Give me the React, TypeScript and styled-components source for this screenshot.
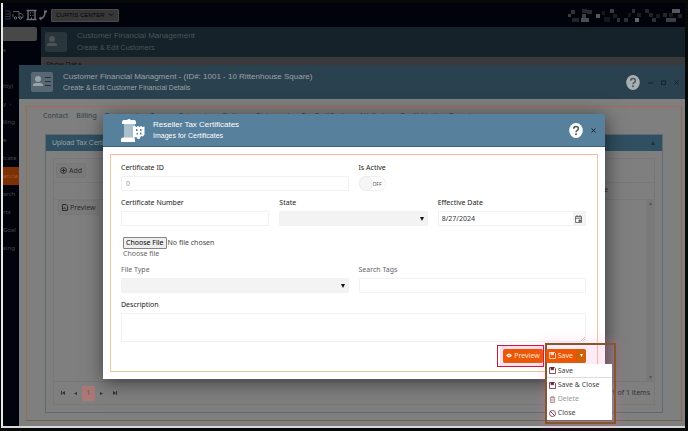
import React from "react";
import styled, { createGlobalStyle, css } from "styled-components";

const ui = '"Noto Sans", "Open Sans", sans-serif';
const head = '"Liberation Sans", Arial, sans-serif';

const Global = createGlobalStyle`
  *, *::before, *::after { box-sizing: border-box; }
  body { margin: 0; background: #070908; font: 7px/10px ${ui}; color: #333; overflow: hidden; }
  button, input, select, textarea { font: inherit; color: inherit; margin: 0; }
`;

const Screen = styled.main`
  position: relative;
  height: 100vh;
  padding: 3px 3px 3px 1px;
`;
const Desktop = styled.div`
  height: 100%;
  display: flex;
  flex-direction: column;
  border-left: 2px solid #e8e8e8;
  border-bottom: 2px solid #d8d8d8;
  background: #00030c;
`;
const TopBar = styled.header`
  flex: none;
  height: 24px;
  padding: 0 2px;
  display: flex;
  align-items: center;
  gap: 4px;
  color: #6d6f72;
`;
const CenterPicker = styled.button`
  display: flex;
  align-items: center;
  gap: 3px;
  height: 13px;
  padding: 0 4px;
  border: 1px solid #4a4a4a;
  border-radius: 1px;
  background: #383838;
  color: #050505;
  font-family: ${head};
  font-size: 6px;
`;
const Mosaic = styled.svg`
  margin-left: auto;
`;
const Columns = styled.div`
  flex: 1;
  display: flex;
  min-height: 0;
`;
const SideBar = styled.nav`
  flex: none;
  width: 38px;
  color: #46484c;
`;
const SideSearch = styled.input`
  display: block;
  width: 34px;
  height: 14px;
  border: 0;
  border-radius: 0 2px 2px 0;
  background: #484848;
`;
const SideLink = styled.a<{ $active?: boolean }>`
  display: block;
  width: 16px;
  height: 18px;
  line-height: 18px;
  font-size: 6px;
  white-space: nowrap;
  color: ${(p) => (p.$active ? "#a35c30" : "inherit")};
  background: ${(p) => (p.$active ? "#7d3003" : "transparent")};
  text-decoration: none;
`;
const BackPage = styled.section`
  flex: 1;
  background: #3a3a3a;
  color: #111;
`;
const TitleBar = styled.header<{ $bg: string; $h: number; $fg: string }>`
  display: flex;
  align-items: center;
  gap: 10px;
  height: ${(p) => p.$h}px;
  padding: 0 6px 0 12px;
  background: ${(p) => p.$bg};
  color: ${(p) => p.$fg};
  font-family: ${head};
`;
const BackTitleBar = styled(TitleBar)`
  padding-left: 4px;
`;
const ModalTitleBar = styled(TitleBar)`
  padding: 0 9px 0 18px;
  gap: 8px;
  border-bottom: 1px solid #3f6277;
`;
const Titles = styled.div`
  flex: 1;
  min-width: 0;
  white-space: nowrap;
`;
const Title = styled.h1<{ $line: number }>`
  margin: 0;
  font-size: 8px;
  font-weight: 400;
  line-height: ${(p) => p.$line}px;
`;
const SubTitle = styled.p<{ $line: number }>`
  margin: 0;
  font-size: 7px;
  line-height: ${(p) => p.$line}px;
`;
const PageCaption = styled.div`
  padding: 3px 5px;
`;
const BarButton = styled.button<{ $ink?: string }>`
  display: flex;
  padding: 0;
  border: 0;
  background: none;
  color: ${(p) => p.$ink ?? "inherit"};
`;
const BarTools = styled.div`
  display: flex;
  align-items: center;
  gap: 8px;
  color: #15232c;
`;

const Window = styled.section`
  position: absolute;
  left: 19px;
  right: 3px;
  top: 65px;
  bottom: 5px;
  display: flex;
  flex-direction: column;
  background: #7f7f7f;
  color: #2b2b2b;
`;
const WindowBody = styled.div`
  flex: 1;
  min-height: 0;
  margin: 7px 3px 5px 7px;
  padding: 4px 18px 7px;
  border: 1px solid;
  border-color: #a8675a #8d6651 #716450 #8d7351;
  display: flex;
  flex-direction: column;
`;
const Tabs = styled.nav`
  display: flex;
  gap: 8px;
  height: 23px;
  overflow: hidden;
  white-space: nowrap;
  margin-left: -2px;
  a { color: #2f404c; text-decoration: none; }
`;
const Panel = styled.section`
  flex: 1;
  min-height: 0;
  display: flex;
  flex-direction: column;
  border: 1px solid #5d6b70;
`;
const PanelHead = styled.header`
  flex: none;
  display: flex;
  align-items: center;
  justify-content: space-between;
  height: 16px;
  padding: 0 7px 0 6px;
  background: #304f60;
  color: #98a4aa;
  font-family: ${head};
  svg { color: #1b303c; }
`;
const GridBox = styled.div`
  flex: 1;
  margin: 7px;
  border: 1px solid #787878;
  display: flex;
  flex-direction: column;
`;
const GridTools = styled.div`
  padding: 4px 2px;
  border-bottom: 1px solid #787878;
`;
const GridHead = styled.div`
  height: 17px;
  padding: 2px 46px;
  text-align: right;
  border-bottom: 1px solid #787878;
`;
const GridRows = styled.div`
  flex: 1;
  display: flex;
  justify-content: space-between;
  align-items: stretch;
`;
const RowTools = styled.div`
  display: flex;
  align-items: flex-start;
  padding: 0 4px;
`;
const ScrollTrack = styled.div`
  width: 8px;
  display: flex;
  flex-direction: column;
  justify-content: space-between;
  align-items: center;
  padding: 2px 0;
  background: #797979;
  color: #555;
`;
const FlatButton = styled.button`
  display: inline-flex;
  align-items: center;
  gap: 2px;
  height: 15px;
  padding: 0 3px;
  border: 1px solid #777;
  border-radius: 1px;
  background: #7b7b7b;
`;
const Pager = styled.footer`
  display: flex;
  align-items: center;
  height: 23px;
  padding: 0 4px 0 2px;
  border-top: 1px solid #767676;
  color: #333;
`;
const PageButton = styled.button<{ $on?: boolean }>`
  display: grid;
  place-items: center;
  width: 13px;
  height: 15px;
  padding: 0;
  border: 0;
  background: ${(p) => (p.$on ? "#a97877" : "transparent")};
  color: ${(p) => (p.$on ? "#884844" : "inherit")};
`;
const PageInfo = styled.span`
  margin-left: auto;
`;

const Overlay = styled.div`
  position: absolute;
  inset: 0;
  padding: 114px 83px 0 103px;
`;
const Modal = styled.section`
  background: #fff;
  box-shadow: 1px 3px 18px rgba(0, 0, 0, 0.55);
`;
const ModalBody = styled.div`
  padding: 7px;
`;
const Form = styled.form`
  display: flex;
  flex-direction: column;
  gap: 7px;
  padding: 8px 11px 8px 10px;
  border: 1px solid;
  border-color: #ffb59c #f5c6a5 #dccb9d #f3c5a4;
`;
const Row = styled.div<{ $cols: number }>`
  display: grid;
  grid-template-columns: repeat(${(p) => p.$cols}, minmax(0, 1fr));
  gap: 10px;
`;
const Field = styled.div`
  display: flex;
  flex-direction: column;
  gap: 3px;
`;
const Label = styled.label<{ $soft?: boolean }>`
  color: ${(p) => (p.$soft ? "#666" : "#222")};
`;
const box = css`
  width: 100%;
  height: 15px;
  padding: 0 4px;
  border: 1px solid #f1f1f1;
  border-radius: 1px;
  background: #fff;
  outline: 0;
`;
const TextInput = styled.input<{ $muted?: boolean }>`
  ${box}
  color: ${(p) => (p.$muted ? "#999" : "#333")};
`;
const Area = styled.textarea`
  ${box}
  display: block;
  height: 29px;
  resize: none;
`;
const AreaBox = styled.div`
  position: relative;
  svg { position: absolute; right: 1px; bottom: 1px; }
`;
const SelectBox = styled.div`
  position: relative;
  svg { position: absolute; right: 4px; top: 6px; color: #111; pointer-events: none; }
`;
const Select = styled.select`
  ${box}
  display: block;
  appearance: none;
  background: #f3f3f3;
`;
const DateBox = styled.div`
  display: flex;
  border: 1px solid #f1f1f1;
  height: 15px;
  input { border: 0; height: 13px; padding: 0 3px; }
`;
const DateButton = styled.button`
  flex: none;
  display: grid;
  place-items: center;
  width: 12px;
  padding: 0;
  border: 0;
  background: #f3f3f3;
  color: #555;
`;
const Switch = styled.span`
  position: relative;
  display: flex;
  align-items: center;
  justify-content: flex-end;
  width: 27px;
  height: 15px;
  padding-right: 3px;
  border: 1px solid #efefef;
  border-radius: 8px;
  font-size: 5px;
  color: #555;
`;
const SwitchInput = styled.input`
  position: absolute;
  left: -1px;
  top: -1px;
  width: 14px;
  height: 15px;
  appearance: none;
  border: 1px solid #ececec;
  border-radius: 50%;
  background: #f6f6f6;
`;
const FileField = styled.div`
  display: flex;
  flex-direction: column;
  align-items: flex-start;
  padding: 4px 0 0 2px;
  line-height: 9px;
`;
const FileInput = styled.input`
  height: 12px;
  line-height: 10px;
  color: #444;
  &::file-selector-button {
    font: 7px/10px ${ui};
    height: 12px;
    padding: 0 2px;
    margin: 0 1px 0 0;
    border: 1px solid #858585;
    border-radius: 1px;
    background: #efefef;
    color: #000;
  }
`;
const Actions = styled.div`
  display: flex;
  justify-content: flex-end;
  gap: 3px;
`;
const Marked = styled.div`
  position: relative;
  background: #ffdcef;
  box-shadow: 0 0 0 3px #ffdcef;
  &::before {
    content: "";
    position: absolute;
    inset: -4px -1px -4px -6px;
    border: 1px solid #cf1635;
    pointer-events: none;
  }
`;
const Orange = styled.button`
  display: flex;
  align-items: center;
  justify-content: center;
  gap: 2px;
  height: 14px;
  padding: 0 3px;
  border: 0;
  border-bottom: 1px solid #c96a0e;
  border-radius: 2px;
  background: #ec5706;
  color: #ffe6d6;
`;
const SaveGroup = styled.div`
  position: relative;
  z-index: 1;
  display: flex;
  background: #ffdcef;
  &::before {
    content: "";
    position: absolute;
    left: -1px;
    top: -6px;
    width: 71px;
    height: 81px;
    border: 2px solid #85572c;
    background: rgba(255, 110, 185, 0.14);
    box-shadow: 0 0 8px 4px rgba(255, 110, 185, 0.14);
    pointer-events: none;
  }
`;
const SaveMain = styled(Orange)`
  position: relative;
  border-radius: 2px 0 0 2px;
`;
const SaveMore = styled(Orange)`
  position: relative;
  width: 10px;
  padding: 0;
  border-radius: 0 2px 2px 0;
  background: #d15f05;
  color: #fff;
`;
const Menu = styled.div`
  position: absolute;
  left: 1px;
  top: 15px;
  width: 65px;
  background: #fff;
`;
const MenuItem = styled.button<{ $line?: boolean }>`
  display: flex;
  align-items: center;
  gap: 2px;
  width: 100%;
  height: 14px;
  padding: 0 2px;
  border: 0;
  border-bottom: ${(p) => (p.$line ? "1px solid #ddd" : "0")};
  background: none;
  color: #444;
  &:disabled { color: #999; }
  svg { color: #6b2437; }
  &:disabled svg { color: #aa7c89; }
`;

const CardIcon = () => (
  <svg width="22" height="20" viewBox="0 0 22 20" fill="none">
    <rect width="22" height="20" rx="2" fill="currentColor" fillOpacity=".4" />
    <circle cx="7" cy="7" r="3" fill="currentColor" />
    <path d="M2 14v-1q0-2 3-2h4q3 0 3 2v1z" fill="currentColor" />
    <path d="M14 5.500h6M14 9.500h6M14 13.500h6" stroke="#23343e" strokeWidth="1" />
  </svg>
);
const CertIcon = () => (
  <svg width="24" height="24" viewBox="0 0 24 24" fill="#fff">
    <path d="M3 5h11v15H3z" fillOpacity=".5" />
    <path d="M1 4q0-2 2-2h3q2-2 4 0h3q2 0 2 2v2H1zM0 21.500q0-2 2-2h10q2 0 2 2V24H0z" />
    <path d="M12 8.500l2-.500 1.500 1 1.500-1 1.500 1 1.500-1 1.500 1 2-.500v8l-1.500 2-2-.500-1.500 3h-2l-1-2-3.500.500z" />
    <path d="M15 11h1.500v2H15zM19 11h1.500v2H19zM15.500 15h1.500v1.500h-1.500zM19 14.500h1.500v2H19z" fill="#56809b" />
  </svg>
);
const HelpIcon = () => (
  <svg width="14" height="15" viewBox="0 0 14 15">
    <ellipse cx="7" cy="7.500" rx="6.800" ry="7.400" fill="currentColor" />
    <path d="M4.700 5.800Q4.700 3.500 7 3.500t2.400 2Q9.400 7 8 7.700 7 8.200 7 9.300" fill="none" stroke="#415764" strokeWidth="1.500" />
    <circle cx="7" cy="11.300" r="1" fill="#415764" />
  </svg>
);
const CloseIcon = () => (
  <svg width="5" height="5" viewBox="0 0 5 5" stroke="currentColor" fill="none">
    <path d="M.5.500l4 4M4.500.500l-4 4" />
  </svg>
);
const Tri = ({ d = "down", s = 4 }: { d?: "down" | "up" | "left" | "right"; s?: number }) => {
  const paths = { down: "M0 0h4L2 4z", up: "M0 4h4L2 0z", left: "M4 0v4L0 2z", right: "M0 0v4l4-2z" };
  return (
    <svg width={s} height={s} viewBox="0 0 4 4" fill="currentColor">
      <path d={paths[d]} />
    </svg>
  );
};
const DiskIcon = () => (
  <svg width="7" height="7" viewBox="0 0 7 7" fill="none" stroke="currentColor" strokeWidth=".8">
    <path d="M.5.500h5l1 1v5h-6z" />
    <path d="M2 .500h2.500v2.200H2z" fill="currentColor" />
  </svg>
);
const EyeIcon = () => (
  <svg width="6" height="5" viewBox="0 0 7 5">
    <path d="M0 2.500Q3.500-2 7 2.500 3.500 7 0 2.500z" fill="currentColor" />
    <circle cx="3.500" cy="2.500" r=".7" fill="#ec5706" />
  </svg>
);
const TrashIcon = () => (
  <svg width="7" height="7" viewBox="0 0 7 7" fill="none" stroke="currentColor" strokeWidth=".8">
    <path d="M.8 1.500h5.400M2.500 1.300V.4h2v.9M1.400 2v4.500h4.200V2M2.800 2.500v3M4.200 2.500v3" />
  </svg>
);
const BanIcon = () => (
  <svg width="7" height="7" viewBox="0 0 7 7" fill="none" stroke="currentColor" strokeWidth=".8">
    <circle cx="3.500" cy="3.500" r="3" />
    <path d="M1.400 1.400l4.200 4.200" />
  </svg>
);
const PlusIcon = () => (
  <svg width="7" height="7" viewBox="0 0 7 7" fill="none" stroke="currentColor" strokeWidth=".8">
    <circle cx="3.500" cy="3.500" r="3" />
    <path d="M3.500 1.500v4M1.500 3.500h4" strokeWidth="1.200" />
  </svg>
);
const FileIcon = () => (
  <svg width="6" height="7" viewBox="0 0 6 7" fill="none" stroke="currentColor">
    <path d="M.5.500h3.500l1.500 1.500v4.500h-5z" />
    <path d="M1.500 5l1-1.500L3.500 5" />
  </svg>
);
const CalendarIcon = () => (
  <svg width="7" height="8" viewBox="0 0 7 8" fill="none" stroke="currentColor" strokeWidth=".8">
    <path d="M.5 1.500h6v6h-6zM.5 3.200h6M2 0v1.500M5 0v1.500" />
    <path d="M4 5h1.500v1.500H4z" fill="currentColor" />
  </svg>
);
const TopIcons = () => (
  <svg width="42" height="12" viewBox="0 0 42 12" fill="none" stroke="currentColor">
    <path d="M0 2h5v8H0M0 5h5M0 7.500h5" stroke="#33363a" />
    <path d="M8 2.500h6v6h-1M14 4.500h2.500l1.500 2v2h-1M8 8.500V5" stroke="#55585b" />
    <circle cx="10.500" cy="9" r="1.200" />
    <circle cx="15.500" cy="9" r="1.200" />
    <path d="M23 1.500h7v9h-7zM21.500 1.500h10M21.500 10.500h10" strokeWidth="1.400" />
    <path d="M25 4h1M27.500 4h1M25 6.500h1M27.500 6.500h1M26.500 8.500v2" />
    <path d="M35 9.500q5 0 5-7" strokeWidth="1.500" />
    <path d="M34.500 8.500l2 2M39 2.500h3" strokeWidth="2" />
  </svg>
);

const blocks: [number, number, number, number, string][] = [
  [3, 2, 4, 4, "#303338"], [0, 6, 3, 3, "#3a3d40"], [4, 10, 7, 4, "#222529"], [14, 1, 5, 4, "#24282d"],
  [19, 2, 5, 4, "#282c30"], [14, 6, 4, 4, "#3b3f43"], [13, 10, 8, 4, "#4b4e51"], [28, 6, 4, 4, "#56595b"],
  [34, 3, 3, 4, "#15191f"], [36, 9, 6, 5, "#14181e"], [42, 1, 4, 4, "#3a3d40"], [45, 6, 4, 4, "#1a1e23"],
  [49, 10, 3, 4, "#2c3034"], [56, 10, 4, 4, "#2c3034"], [60, 5, 3, 4, "#14181e"], [64, 1, 3, 4, "#2b2f33"],
  [67, 10, 4, 4, "#65676a"], [69, 5, 4, 4, "#1a1e23"], [77, 1, 4, 4, "#24282d"], [81, 5, 4, 4, "#202429"],
  [84, 10, 4, 4, "#2b2f33"], [88, 6, 4, 4, "#171b21"], [95, 5, 4, 4, "#24282d"], [98, 10, 10, 4, "#3c3f43"],
  [104, 1, 8, 4, "#56595b"], [101, 5, 4, 4, "#171b21"], [110, 6, 4, 4, "#202429"],
];

const sideItems: [string, boolean?][] = [
  ["s"], [""], ["lity)"], ["y \u00a0›"], ["lling"], ["e"], ["icate"], ["ancia", true], ["arch"], ["rts"], ["Goal"], ["sing"],
];
const tabs = ["Contact", "Billing", "Documents", "Terms", "Categories", "Options", "Statements", "Tax Certificates", "Attributes", "Credit Limits", "Reports"];

export default function App() {
  return (
    <Screen>
      <Global />
      <Desktop>
        <TopBar>
          <TopIcons />
          <CenterPicker type="button">
            CURTIS CENTER
            <svg width="6" height="4" viewBox="0 0 6 4" fill="none" stroke="currentColor"><path d="M1 .500l2 2 2-2" /></svg>
          </CenterPicker>
          <Mosaic width="115" height="15" viewBox="0 0 115 15">
            {blocks.map(([x, y, w, h, c], i) => <rect key={i} x={x} y={y} width={w} height={h} fill={c} />)}
          </Mosaic>
        </TopBar>
        <Columns>
          <SideBar aria-label="Main">
            <SideSearch aria-label="Search menu" />
            {sideItems.map(([t, on], i) => <SideLink key={i} href="#" $active={on}>{t}</SideLink>)}
          </SideBar>
          <BackPage>
            <BackTitleBar $bg="#152229" $h={30} $fg="#4c5458">
              <CardIcon />
              <Titles>
                <Title $line={12}>Customer Financial Management</Title>
                <SubTitle $line={12}>Create &amp; Edit Customers</SubTitle>
              </Titles>
            </BackTitleBar>
            <PageCaption>Show Data</PageCaption>
          </BackPage>
        </Columns>
      </Desktop>

      <Window>
        <TitleBar $bg="#2a414f" $h={34} $fg="#9aa3a8">
          <CardIcon />
          <Titles>
            <Title $line={12}>Customer Financial Managment - (ID#: 1001 - 10 Rittenhouse Square)</Title>
            <SubTitle $line={10}>Create &amp; Edit Customer Financial Details</SubTitle>
          </Titles>
          <BarTools>
            <BarButton aria-label="Help" $ink="#a9aeb1"><HelpIcon /></BarButton>
            <BarButton aria-label="Minimize"><svg width="5" height="5" stroke="currentColor"><path d="M0 3h5" /></svg></BarButton>
            <BarButton aria-label="Maximize"><svg width="5" height="5" fill="none" stroke="currentColor"><path d="M.5 1h4v3.500h-4z" /></svg></BarButton>
            <BarButton aria-label="Close"><CloseIcon /></BarButton>
          </BarTools>
        </TitleBar>
        <WindowBody>
          <Tabs>{tabs.map((t) => <a key={t} href="#">{t}</a>)}</Tabs>
          <Panel>
            <PanelHead>Upload Tax Certificates<Tri d="up" /></PanelHead>
            <GridBox>
              <GridTools><FlatButton type="button"><PlusIcon />Add</FlatButton></GridTools>
              <GridHead>Date</GridHead>
              <GridRows>
                <RowTools>
                  <FlatButton type="button"><FileIcon />Preview</FlatButton>
                </RowTools>
                <ScrollTrack><Tri d="up" s={3} /><Tri s={3} /></ScrollTrack>
              </GridRows>
              <Pager>
                <PageButton aria-label="First page"><svg width="4" height="4" fill="currentColor"><path d="M0 0h1v4H0zM4 0v4L1 2z" /></svg></PageButton>
                <PageButton aria-label="Previous page"><Tri d="left" s={3} /></PageButton>
                <PageButton $on>1</PageButton>
                <PageButton aria-label="Next page"><Tri d="right" s={3} /></PageButton>
                <PageButton aria-label="Last page"><svg width="4" height="4" fill="currentColor"><path d="M0 0v4l3-2zM3 0h1v4H3z" /></svg></PageButton>
                <PageInfo>1 - 1 of 1 items</PageInfo>
              </Pager>
            </GridBox>
          </Panel>
        </WindowBody>
      </Window>

      <Overlay>
        <Modal role="dialog" aria-label="Reseller Tax Certificates">
          <ModalTitleBar $bg="#56809b" $h={33} $fg="#fff">
            <CertIcon />
            <Titles>
              <Title $line={11}>Reseller Tax Certificates</Title>
              <SubTitle $line={11}>Images for Certificates</SubTitle>
            </Titles>
            <BarTools>
              <BarButton aria-label="Help" $ink="#fff"><HelpIcon /></BarButton>
              <BarButton aria-label="Close"><CloseIcon /></BarButton>
            </BarTools>
          </ModalTitleBar>
          <ModalBody>
            <Form onSubmit={(e) => e.preventDefault()}>
              <Row $cols={2}>
                <Field><Label htmlFor="cid">Certificate ID</Label><TextInput id="cid" $muted defaultValue="0" /></Field>
                <Field>
                  <Label htmlFor="active">Is Active</Label>
                  <Switch><SwitchInput id="active" type="checkbox" />OFF</Switch>
                </Field>
              </Row>
              <Row $cols={3}>
                <Field><Label htmlFor="num">Certificate Number</Label><TextInput id="num" /></Field>
                <Field>
                  <Label htmlFor="state">State</Label>
                  <SelectBox><Select id="state"><option /></Select><Tri /></SelectBox>
                </Field>
                <Field>
                  <Label htmlFor="date">Effective Date</Label>
                  <DateBox>
                    <TextInput id="date" defaultValue="8/27/2024" />
                    <DateButton type="button" aria-label="Open calendar"><CalendarIcon /></DateButton>
                  </DateBox>
                </Field>
              </Row>
              <FileField>
                <FileInput id="file" type="file" />
                <Label $soft htmlFor="file">Choose file</Label>
              </FileField>
              <Row $cols={2}>
                <Field>
                  <Label $soft htmlFor="type">File Type</Label>
                  <SelectBox><Select id="type"><option /></Select><Tri /></SelectBox>
                </Field>
                <Field><Label $soft htmlFor="tags">Search Tags</Label><TextInput id="tags" /></Field>
              </Row>
              <Field>
                <Label htmlFor="desc">Description</Label>
                <AreaBox>
                  <Area id="desc" />
                  <svg width="4" height="4" stroke="#aaa" strokeWidth=".6"><path d="M0 4l4-4M2 4l2-2" /></svg>
                </AreaBox>
              </Field>
              <Actions>
                <Marked><Orange type="button"><EyeIcon />Preview</Orange></Marked>
                <SaveGroup>
                  <SaveMain type="submit"><DiskIcon />Save</SaveMain>
                  <SaveMore type="button" aria-label="More save options"><Tri s={3} /></SaveMore>
                  <Menu>
                    <MenuItem type="button" $line><DiskIcon />Save</MenuItem>
                    <MenuItem type="button"><DiskIcon />Save &amp; Close</MenuItem>
                    <MenuItem type="button" disabled><TrashIcon />Delete</MenuItem>
                    <MenuItem type="button"><BanIcon />Close</MenuItem>
                  </Menu>
                </SaveGroup>
              </Actions>
            </Form>
          </ModalBody>
        </Modal>
      </Overlay>
    </Screen>
  );
}
